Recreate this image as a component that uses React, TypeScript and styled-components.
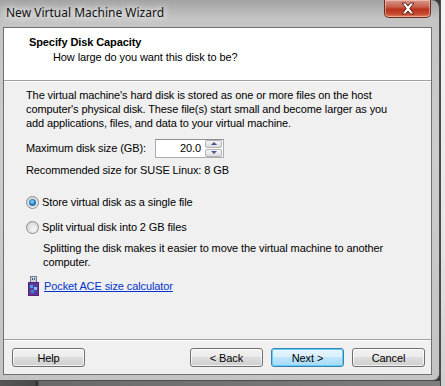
import styled, { createGlobalStyle } from "styled-components";

const GlobalStyle = createGlobalStyle`
  html, body {
    margin: 0;
    padding: 0;
  }
  body {
    background: #3a3a3a;
    font-family: "Liberation Sans", Arial, sans-serif;
    font-size: 11px;
    letter-spacing: -0.1px;
    color: #000;
  }
`;

const Screen = styled.div`
  width: 445px;
  height: 386px;
  overflow: hidden;
  display: grid;
  grid-template-columns: 440px 5px;
  grid-template-rows: 381px 5px;
  grid-template-areas:
    "win side"
    "shadow side";
`;

const SideStrip = styled.div`
  grid-area: side;
  background: linear-gradient(180deg, #f4f4f4 0%, #e6e6e6 60%, #cfcfcf 100%);
  border-left: 1px solid #4a4a4a;
`;

const BottomShadow = styled.div`
  grid-area: shadow;
  background: linear-gradient(90deg, #555 0%, #4a4a4a 8%, #2a2a2a 8.3%, #6a6a6a 9%, #7d7d7d 100%);
`;

const Window = styled.div`
  grid-area: win;
  box-sizing: border-box;
  display: flex;
  flex-direction: column;
  background: linear-gradient(180deg, #a3a3a3 0%, #c4c4c4 5%, #cdcdcd 40%, #c3c3c3 100%);
  border-right: 1px solid #4d4d4d;
  border-bottom: 1px solid #4d4d4d;
  border-radius: 0 8px 7px 0;
  padding: 0 7px 5px 3px;
`;

const TitleBar = styled.div`
  height: 27px;
  flex: none;
  display: flex;
  align-items: flex-start;
  justify-content: space-between;
`;

const Title = styled.div`
  margin: 5px 0 0 3px;
  font-family: "Noto Sans", "Open Sans", sans-serif;
  font-size: 12px;
  letter-spacing: 0;
  line-height: 16px;
  color: #111;
  text-shadow: 0 0 6px #fff, 0 0 10px #fff;
`;

const CloseButton = styled.div`
  width: 47px;
  height: 18px;
  margin-right: 1px;
  box-sizing: border-box;
  border: 1px solid #6d2a20;
  border-top: none;
  border-radius: 0 0 5px 5px;
  background: linear-gradient(180deg, #d89a8c 0%, #c9604b 40%, #b8321c 55%, #c7482e 80%, #e07e5e 100%);
  box-shadow: inset 0 0 0 1px rgba(255, 220, 210, 0.5);
  display: flex;
  align-items: center;
  justify-content: center;
`;

const Client = styled.div`
  flex: 1;
  display: flex;
  flex-direction: column;
  background: #f0f0f0;
  border: 1px solid #707070;
`;

const Header = styled.div`
  height: 52px;
  flex: none;
  box-sizing: border-box;
  background: #fff;
  padding: 7px 0 0 25px;
`;

const HeaderTitle = styled.div`
  font-weight: bold;
  line-height: 14px;
`;

const HeaderSub = styled.div`
  margin: 1px 0 0 24px;
  line-height: 14px;
`;

const Body = styled.div`
  flex: 1;
  padding: 7px 0 0 22px;
  border-top: 1px solid #a0a0a0;
  box-shadow: inset 0 1px 0 #fff;
`;

const Para = styled.p<{ $indent?: number; $top?: number }>`
  margin: ${(p) => p.$top ?? 0}px 0 0 ${(p) => p.$indent ?? 0}px;
  line-height: 14px;
`;

const SizeRow = styled.div`
  margin-top: 8px;
  height: 20px;
  display: flex;
  align-items: center;
`;

const SizeLabel = styled.span`
  width: 129px;
`;

const SpinBox = styled.div`
  box-sizing: border-box;
  width: 69px;
  height: 19px;
  border: 1px solid #abadb3;
  border-top-color: #8e8f8f;
  background: #fff;
  display: flex;
  align-items: stretch;
`;

const SpinValue = styled.div`
  flex: 1;
  text-align: right;
  padding-right: 4px;
  line-height: 17px;
`;

const SpinButtons = styled.div`
  width: 17px;
  display: flex;
  flex-direction: column;
  gap: 1px;
  padding: 0 1px 0 0;
`;

const SpinButton = styled.div`
  flex: 1;
  box-sizing: border-box;
  border: 1px solid #b4b4b4;
  border-radius: 2px;
  background: linear-gradient(180deg, #f6f6f6 0%, #e8e8e8 50%, #dadada 100%);
  display: flex;
  align-items: center;
  justify-content: center;
`;

const Arrow = styled.span<{ $up?: boolean }>`
  width: 0;
  height: 0;
  border-left: 3px solid transparent;
  border-right: 3px solid transparent;
  ${(p) => (p.$up ? "border-bottom: 3px solid #3d5a8a;" : "border-top: 3px solid #3d5a8a;")}
`;

const RadioRow = styled.label<{ $top: number }>`
  margin-top: ${(p) => p.$top}px;
  display: flex;
  align-items: center;
  gap: 3px;
  line-height: 14px;
`;

const RadioDot = styled.span<{ $checked?: boolean }>`
  box-sizing: border-box;
  width: 13px;
  height: 13px;
  border-radius: 50%;
  border: 1px solid #8b8b8b;
  background: radial-gradient(circle at 60% 65%, #f6f6f6 0%, #e4e4e4 45%, #c9c9c9 100%);
  display: flex;
  align-items: center;
  justify-content: center;
  &::after {
    content: "";
    display: ${(p) => (p.$checked ? "block" : "none")};
    width: 7px;
    height: 7px;
    border-radius: 50%;
    background: radial-gradient(circle at 45% 40%, #9fe0ff 0%, #2e8fd0 40%, #0d3d6b 100%);
  }
`;

const LinkRow = styled.div`
  margin-top: 7px;
  height: 20px;
  display: flex;
  align-items: center;
  padding-left: 2px;
  gap: 5px;
`;

const Link = styled.a`
  color: #0033cc;
  text-decoration: underline;
  line-height: 14px;
`;

const Footer = styled.div`
  height: 26px;
  flex: none;
  border-top: 1px solid #a0a0a0;
  box-shadow: inset 0 1px 0 #fff;
  padding: 8px 6px 0 8px;
  display: flex;
  align-items: flex-start;
  gap: 8px;
`;

const Spacer = styled.div`
  flex: 1;
`;

const Button = styled.button<{ $default?: boolean }>`
  box-sizing: border-box;
  width: 73px;
  height: 19px;
  padding: 0;
  font-family: inherit;
  font-size: 11px;
  letter-spacing: inherit;
  color: #000;
  border-radius: 3px;
  border: 1px solid ${(p) => (p.$default ? "#3c7fb1" : "#707070")};
  background: ${(p) =>
    p.$default
      ? "linear-gradient(180deg, #eaf6fd 0%, #d9f0fc 45%, #bee6fd 50%, #a7d9f5 100%)"
      : "linear-gradient(180deg, #f2f2f2 0%, #ebebeb 45%, #dddddd 50%, #cfcfcf 100%)"};
  box-shadow: inset 0 0 0 1px ${(p) => (p.$default ? "#5ed0f7" : "rgba(255,255,255,0.7)")};
`;

function CloseGlyph() {
  return (
    <svg width="16" height="13" viewBox="0 0 16 13">
      <path
        d="M2 1 L5.5 1 L8 4 L10.5 1 L14 1 L9.8 6.5 L14 12 L10.5 12 L8 9 L5.5 12 L2 12 L6.2 6.5 Z"
        fill="#fff"
        stroke="#5a2218"
        strokeWidth="1"
        strokeLinejoin="round"
      />
    </svg>
  );
}

function PocketIcon() {
  return (
    <svg width="11" height="20" viewBox="0 0 11 20">
      <rect x="2.5" y="0.5" width="6" height="6" fill="#c9d3de" stroke="#6f7c8a" />
      <rect x="4" y="2" width="1" height="2" fill="#3d5c88" />
      <rect x="6" y="2" width="1" height="2" fill="#3d5c88" />
      <rect x="0.5" y="6.5" width="10" height="13" fill="#5a3a9a" stroke="#5a1f6e" />
      <rect x="2" y="9" width="3" height="3" fill="#4aa0e8" />
      <rect x="6" y="11" width="3" height="3" fill="#7cc4ff" />
      <rect x="3" y="14" width="3" height="3" fill="#3b86d6" />
    </svg>
  );
}

export default function App() {
  return (
    <>
      <GlobalStyle />
      <Screen>
        <Window>
          <TitleBar>
            <Title>New Virtual Machine Wizard</Title>
            <CloseButton>
              <CloseGlyph />
            </CloseButton>
          </TitleBar>
          <Client>
            <Header>
              <HeaderTitle>Specify Disk Capacity</HeaderTitle>
              <HeaderSub>How large do you want this disk to be?</HeaderSub>
            </Header>
            <Body>
              <Para>
                The virtual machine's hard disk is stored as one or more files on the host
                <br />
                computer's physical disk. These file(s) start small and become larger as you
                <br />
                add applications, files, and data to your virtual machine.
              </Para>
              <SizeRow>
                <SizeLabel>Maximum disk size (GB):</SizeLabel>
                <SpinBox>
                  <SpinValue>20.0</SpinValue>
                  <SpinButtons>
                    <SpinButton>
                      <Arrow $up />
                    </SpinButton>
                    <SpinButton>
                      <Arrow />
                    </SpinButton>
                  </SpinButtons>
                </SpinBox>
              </SizeRow>
              <Para $top={5}>Recommended size for SUSE Linux: 8 GB</Para>
              <RadioRow $top={18}>
                <RadioDot $checked />
                Store virtual disk as a single file
              </RadioRow>
              <RadioRow $top={11}>
                <RadioDot />
                Split virtual disk into 2 GB files
              </RadioRow>
              <Para $indent={17} $top={7}>
                Splitting the disk makes it easier to move the virtual machine to another
                <br />
                computer.
              </Para>
              <LinkRow>
                <PocketIcon />
                <Link>Pocket ACE size calculator</Link>
              </LinkRow>
            </Body>
            <Footer>
              <Button>Help</Button>
              <Spacer />
              <Button>&lt; Back</Button>
              <Button $default>Next &gt;</Button>
              <Button>Cancel</Button>
            </Footer>
          </Client>
        </Window>
        <SideStrip />
        <BottomShadow />
      </Screen>
    </>
  );
}
